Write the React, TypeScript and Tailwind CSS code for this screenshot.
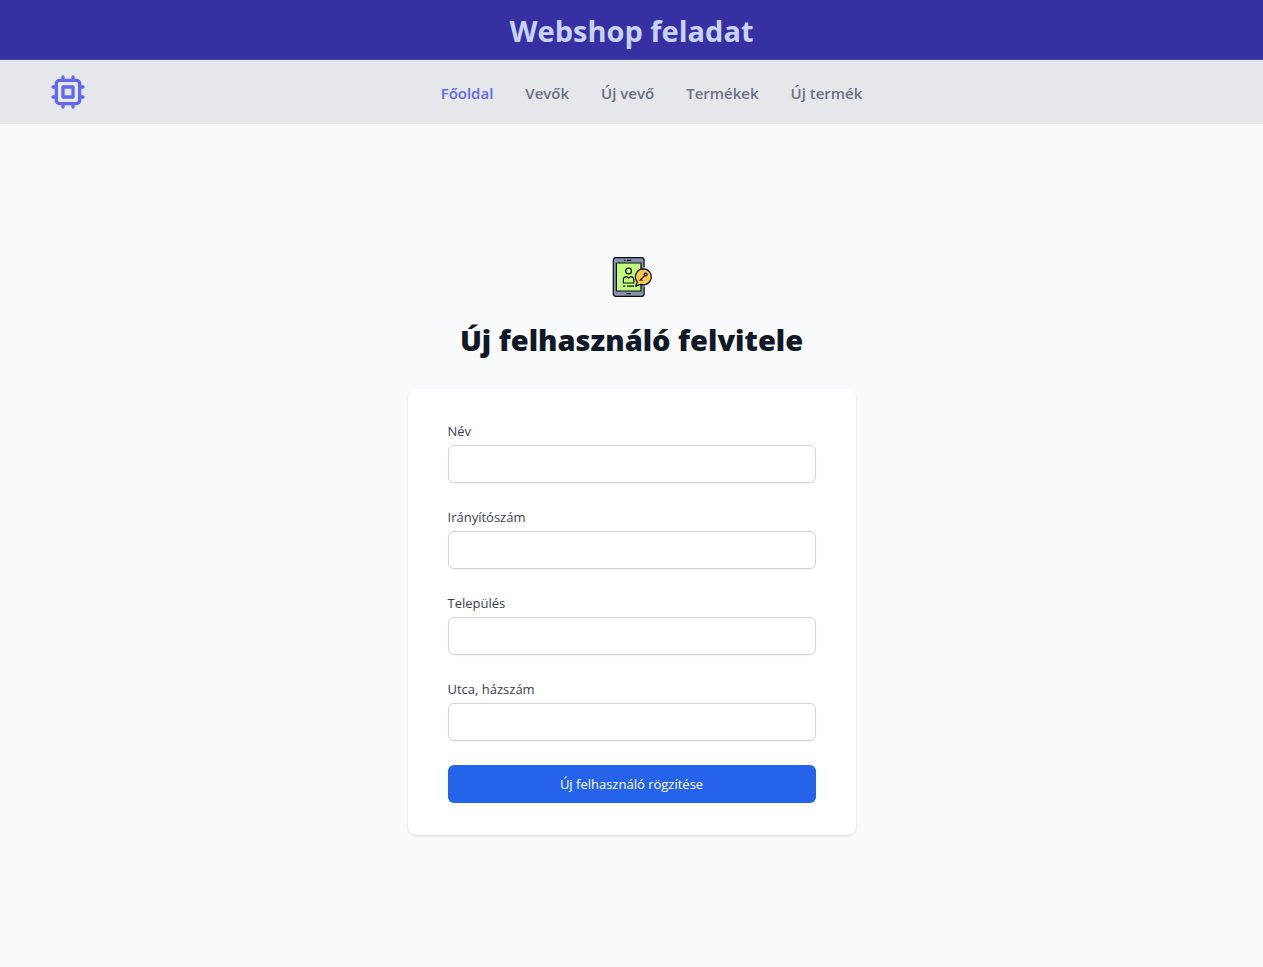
const navItems = ["Főoldal", "Vevők", "Új vevő", "Termékek", "Új termék"];

const fields = [
  { id: "name", label: "Név" },
  { id: "zip", label: "Irányítószám" },
  { id: "city", label: "Település" },
  { id: "address", label: "Utca, házszám" },
];

function ChipLogo() {
  return (
    <svg
      className="h-10 w-10 text-[#6366f1]"
      viewBox="0 0 24 24"
      fill="none"
      stroke="currentColor"
      strokeWidth="2"
      strokeLinecap="round"
      strokeLinejoin="round"
      aria-hidden="true"
    >
      <path d="M9 3v2m6-2v2M9 19v2m6-2v2M5 9H3m2 6H3m18-6h-2m2 6h-2M7 19h10a2 2 0 002-2V7a2 2 0 00-2-2H7a2 2 0 00-2 2v10a2 2 0 002 2zM9 9h6v6H9V9z" />
    </svg>
  );
}

const bubblePath =
  "M31.4 11.9a8 8 0 1 1-2.9 15.5l-4.7 1.4 1.5-3.8A8 8 0 0 1 31.4 11.9z";

function TabletIcon() {
  return (
    <svg
      className="h-10 w-10"
      viewBox="0 0 40 40"
      fill="none"
      stroke="#0b0d18"
      strokeWidth="1.2"
      strokeLinecap="round"
      strokeLinejoin="round"
      aria-hidden="true"
    >
      <rect x="1.3" y="0.7" width="30.8" height="38.6" rx="2.6" fill="#8a93ad" />
      <rect x="4.4" y="6" width="24.6" height="28" fill="#c3fb7a" />
      <path d="M12.6 3.3h.5M15.4 3.3h3.4M14.8 36.6h3.8" />
      <circle cx="16.6" cy="14" r="2.9" />
      <path d="M11.4 26v-3.4a3 3 0 0 1 3-3l2.2 1.4 2.2-1.4a3 3 0 0 1 3 3V26z" />
      <path d="M11.6 29.2h1.2M15.6 29.2h6.2M24 29.2h.4" />
      <path d="M32.1 10.6v1.2M32.1 28.4v1.2" stroke="#f9fafc" strokeWidth="2" strokeLinecap="butt" />
      <path d={bubblePath} fill="#ffc84f" />
      <circle cx="33.6" cy="17.6" r="1.5" />
      <path d="M32.4 18.8l-4.5 4.5M28.9 22.2l1.2 1.2" />
    </svg>
  );
}

export default function App() {
  return (
    <div className="flex min-h-screen flex-col bg-[#f9fafc] font-['Open_Sans','Noto_Sans',sans-serif]">
      <header className="border-b border-[#4a44ad] bg-[#3730a3] pt-3 pb-[9px] text-center">
        <h1 className="text-[29px] leading-[38px] font-bold text-[#c7d2fe]">
          Webshop feladat
        </h1>
      </header>

      <nav className="flex h-16 items-center bg-[#e5e7eb] px-12">
        <a href="#" aria-label="Webshop">
          <ChipLogo />
        </a>
        <ul className="flex flex-1 justify-center gap-8 pt-0.5 text-[15px] leading-6 font-semibold">
          {navItems.map((item, i) => (
            <li key={item}>
              <a href="#" className={i === 0 ? "text-[#6366f1]" : "text-[#6b7280]"}>
                {item}
              </a>
            </li>
          ))}
        </ul>
      </nav>

      <main className="flex flex-1 flex-col items-center justify-center py-12">
        <TabletIcon />
        <h2 className="mt-6 text-center text-[29px] leading-[38px] font-extrabold text-[#111827]">
          Új felhasználó felvitele
        </h2>
        <form
          className="mt-[30px] w-full max-w-md space-y-6 rounded-lg bg-white px-10 py-8 shadow"
          onSubmit={(e) => e.preventDefault()}
        >
          {fields.map(({ id, label }) => (
            <div key={id}>
              <label htmlFor={id} className="block text-[13px] leading-5 text-[#374151]">
                {label}
              </label>
              <input
                id={id}
                name={id}
                type="text"
                className="mt-1 block w-full rounded-md border border-[#d1d5db] bg-white px-3 py-2 text-sm shadow-xs"
              />
            </div>
          ))}
          <button
            type="submit"
            className="block w-full rounded-md border border-transparent bg-[#2563eb] px-4 py-2 text-[13px] leading-5 text-white shadow-xs"
          >
            Új felhasználó rögzítése
          </button>
        </form>
      </main>
    </div>
  );
}
